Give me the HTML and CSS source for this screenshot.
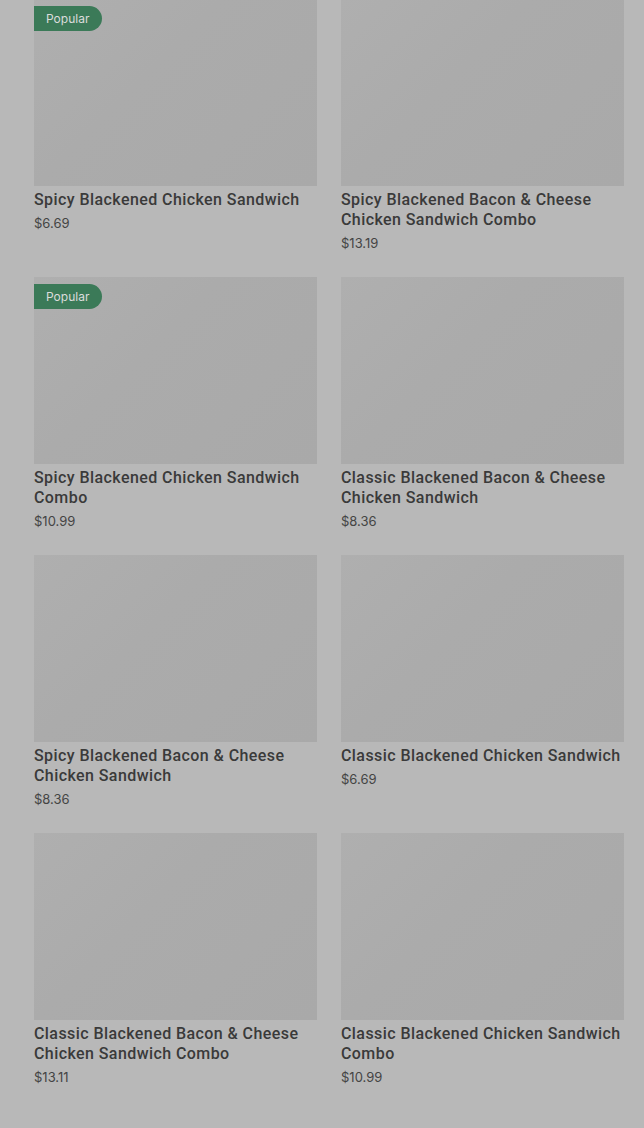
FILE: index.html
```html
<!DOCTYPE html>
<html>
<head>
<meta charset="utf-8">
<link rel="stylesheet" href="styles.css">
</head>
<body>
<div class="grid">
  <div class="card">
    <div class="img"><span class="badge">Popular</span></div>
    <div class="title">Spicy Blackened Chicken Sandwich</div>
    <div class="price">$6.69</div>
  </div>
  <div class="card">
    <div class="img"></div>
    <div class="title">Spicy Blackened Bacon &amp; Cheese Chicken Sandwich Combo</div>
    <div class="price">$13.19</div>
  </div>
  <div class="card">
    <div class="img"><span class="badge">Popular</span></div>
    <div class="title">Spicy Blackened Chicken Sandwich Combo</div>
    <div class="price">$10.99</div>
  </div>
  <div class="card">
    <div class="img"></div>
    <div class="title">Classic Blackened Bacon &amp; Cheese Chicken Sandwich</div>
    <div class="price">$8.36</div>
  </div>
  <div class="card">
    <div class="img"></div>
    <div class="title">Spicy Blackened Bacon &amp; Cheese Chicken Sandwich</div>
    <div class="price">$8.36</div>
  </div>
  <div class="card">
    <div class="img"></div>
    <div class="title">Classic Blackened Chicken Sandwich</div>
    <div class="price">$6.69</div>
  </div>
  <div class="card">
    <div class="img"></div>
    <div class="title">Classic Blackened Bacon &amp; Cheese Chicken Sandwich Combo</div>
    <div class="price">$13.11</div>
  </div>
  <div class="card">
    <div class="img"></div>
    <div class="title">Classic Blackened Chicken Sandwich Combo</div>
    <div class="price">$10.99</div>
  </div>
</div>
</body>
</html>
```
FILE: styles.css
```css
html, body {
  margin: 0;
  padding: 0;
  background: #b8b8b8;
  height: 100%;
  overflow: hidden;
}
body {
  font-family: Roboto, "Noto Sans", sans-serif;
  color: #383838;
}
.grid {
  display: grid;
  grid-template-columns: 283px 283px;
  column-gap: 24px;
  row-gap: 25px;
  padding: 0 20px 0 34px;
  margin-top: -1px;
}
.card {
  display: flex;
  flex-direction: column;
}
.img {
  position: relative;
  height: 187px;
  background: linear-gradient(135deg, #afafaf 0%, #ababab 40%, #a9a9a9 100%);
}
.badge {
  position: absolute;
  top: 7px;
  left: 0;
  height: 25px;
  line-height: 25px;
  padding: 0 13px 0 12px;
  background: #3b7a58;
  color: #dcdcdc;
  font-size: 12px;
  font-family: Inter, Roboto, sans-serif;
  border-radius: 0 13px 13px 0;
}
.title {
  margin-top: 4px;
  font-size: 16px;
  line-height: 20px;
  font-weight: 500;
  letter-spacing: 0.42px;
  color: #3a3a3a;
}
.price {
  margin-top: 4px;
  font-size: 13px;
  line-height: 18px;
  color: #444;
  font-family: Inter, Roboto, sans-serif;
}
```
